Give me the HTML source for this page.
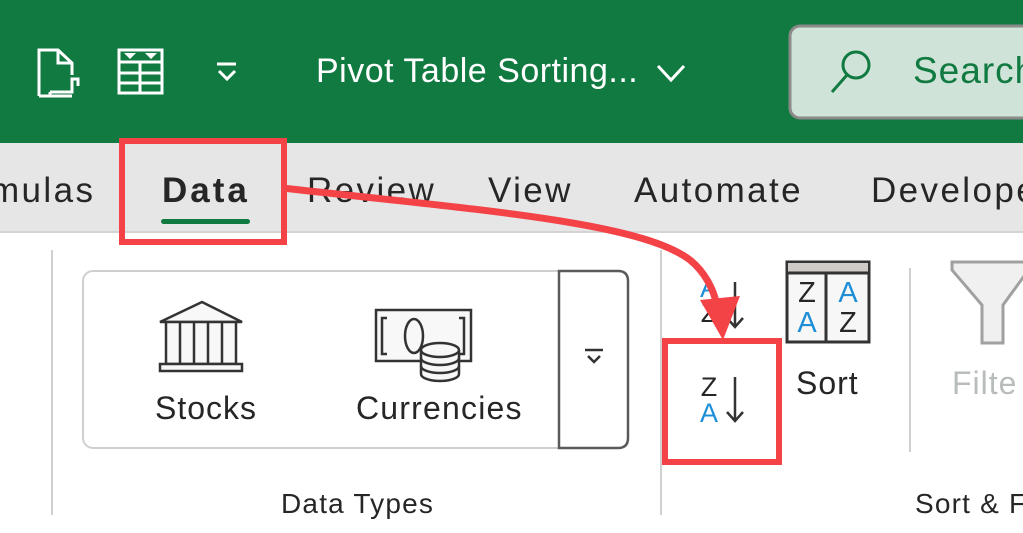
<!DOCTYPE html>
<html><head><meta charset="utf-8"><style>
*{margin:0;padding:0;box-sizing:border-box}
html,body{width:1023px;height:533px;overflow:hidden;background:#fff}
#w{position:relative;width:1023px;height:533px;overflow:hidden;font-family:"Liberation Sans",sans-serif;color:#262626}
.a{position:absolute;white-space:nowrap}
.t{font-size:35px;letter-spacing:2.4px;top:171px}
</style></head><body><div id="w">
<div class="a" style="left:0;top:0;width:1023px;height:143px;background:#117a41"></div>
<div class="a" style="left:0;top:143px;width:1023px;height:90px;background:#e6e6e6;border-bottom:2px solid #d4d4d4"></div>
<svg class="a" style="left:0;top:0" width="1023" height="533">
 <g fill="none" stroke="#fff" stroke-width="3">
  <path d="M39,96 V50 H58 L72,63 V75 M58,50 V63 H72"/>
  <path d="M39,96 H50 M50,92 H72 V79 H78 V86 M50,92 V96 H72"/>
  <rect x="119" y="50" width="43" height="43"/>
  <path d="M119,62 H162 M119,73 H162 M119,83 H162 M140,62 V93"/>
  <path d="M217,64 H236 M219,71 L227,79 L235,71"/>
  <path d="M658,66 L671,80 L684,66"/>
 </g>
 <path d="M124,53 H136 L130,59Z M145,53 H157 L151,59Z" fill="#fff"/>
 <rect x="790" y="26" width="250" height="92" rx="10" fill="#cfe3d8" stroke="#8a8a8a" stroke-width="3"/>
 <g fill="none" stroke="#117a41" stroke-width="3"><circle cx="856" cy="65" r="13"/><path d="M847,75 L832,92"/></g>
 <path d="M52,250 V515 M661,250 V515 M910,268 V452" stroke="#d0d0d0" stroke-width="2"/>
 <rect x="83" y="271" width="545" height="177" rx="10" fill="#fff" stroke="#cfcfcf" stroke-width="2"/>
 <path d="M559,271 V448 H618 Q628,448 628,438 V281 Q628,271 618,271 Z" fill="#fff" stroke="#5a5a5a" stroke-width="2.5"/>
 <path d="M585,350 H603 M588,356 L594,362 L600,356" fill="none" stroke="#333" stroke-width="2.5"/>
 <g fill="#f8f8f8" stroke="#333" stroke-width="2.5">
  <path d="M160,322 L202,302 L242,322 Z"/>
  <rect x="166" y="322" width="70" height="42"/>
  <path d="M180,322 V364 M194,322 V364 M208,322 V364 M222,322 V364" fill="none"/>
  <path d="M160,364 H242 V371 H160 Z"/>
 </g>
 <g fill="#f8f8f8" stroke="#333" stroke-width="2.5">
  <rect x="376" y="310" width="95" height="51"/>
  <path d="M387,318 H382 V354 H387 M459,318 H464 V354 H459" fill="none"/>
  <ellipse cx="414" cy="336" rx="9" ry="17"/>
  <path d="M421,350 V374 A19,7 0 0 0 459,374 V350"/>
  <ellipse cx="440" cy="350" rx="19" ry="7"/>
  <path d="M421,358 A19,7 0 0 0 459,358 M421,366 A19,7 0 0 0 459,366" fill="none"/>
 </g>
 <rect x="787" y="262" width="82" height="80" fill="#f7f7f7" stroke="#333" stroke-width="3"/>
 <rect x="788" y="263" width="80" height="10" fill="#cfcbc8"/>
 <path d="M787,273 H869 M826,273 V342" stroke="#333" stroke-width="3"/>
 <path d="M952,262 H1030 V268 L1003,305 V343 H982 V305 L952,270 Z" fill="#f0f0f0" stroke="#a0a0a0" stroke-width="3"/>
 <g fill="none" stroke="#333" stroke-width="2.5">
  <path d="M735,282 V327 M727,318 L735,327 L743,318"/>
  <path d="M735,377 V421 M727,412 L735,421 L743,412"/>
 </g>
 <rect x="122" y="141" width="162" height="101" fill="none" stroke="#f44347" stroke-width="6"/>
 <rect x="665" y="341" width="114" height="121" fill="none" stroke="#f44347" stroke-width="6"/>
</svg>
<div class="a" style="left:316px;top:52px;font-size:34px;letter-spacing:0.5px;color:#fff">Pivot Table Sorting...</div>
<div class="a" style="left:913px;top:50px;font-size:37px;letter-spacing:1px;color:#117a41">Search</div>
<div class="a t" style="left:-10px">mulas</div>
<div class="a t" style="left:162px;font-weight:bold;letter-spacing:3px">Data</div>
<div class="a" style="left:161px;top:219px;width:89px;height:5px;border-radius:3px;background:#117a41"></div>
<div class="a t" style="left:307px">Review</div>
<div class="a t" style="left:488px">View</div>
<div class="a t" style="left:634px">Automate</div>
<div class="a t" style="left:871px">Develope</div>
<div class="a" style="left:155px;top:390px;font-size:32px;letter-spacing:1px">Stocks</div>
<div class="a" style="left:356px;top:390px;font-size:32px;letter-spacing:1.2px">Currencies</div>
<div class="a" style="left:281px;top:488px;font-size:28px;letter-spacing:1.2px">Data Types</div>
<div class="a" style="left:796px;top:365px;font-size:32px;letter-spacing:1px">Sort</div>
<div class="a" style="left:952px;top:365px;font-size:32px;letter-spacing:1px;color:#b8bcbc">Filte</div>
<div class="a" style="left:915px;top:488px;font-size:28px;letter-spacing:1.2px">Sort &amp; F</div>
<div class="a" style="left:697px;top:276px;font-size:27px;line-height:25px;text-align:center;width:24px"><span style="color:#1e8fd6">A</span><br>Z</div>
<div class="a" style="left:697px;top:374px;font-size:27px;line-height:26px;text-align:center;width:24px">Z<br><span style="color:#1e8fd6">A</span></div>
<div class="a" style="left:790px;top:278px;font-size:29px;line-height:30px;text-align:center;width:34px">Z<br><span style="color:#1e8fd6">A</span></div>
<div class="a" style="left:829px;top:278px;font-size:29px;line-height:30px;text-align:center;width:38px"><span style="color:#1e8fd6">A</span><br>Z</div>
<svg class="a" style="left:0;top:0" width="1023" height="533">
 <path d="M282,188 C480,210 640,222 690,260 C705,272 714,290 717,306" fill="none" stroke="#f44347" stroke-width="7"/>
 <path d="M700,300 L740,296 L723,340 Z" fill="#f44347"/>
</svg>
</div></body></html>
